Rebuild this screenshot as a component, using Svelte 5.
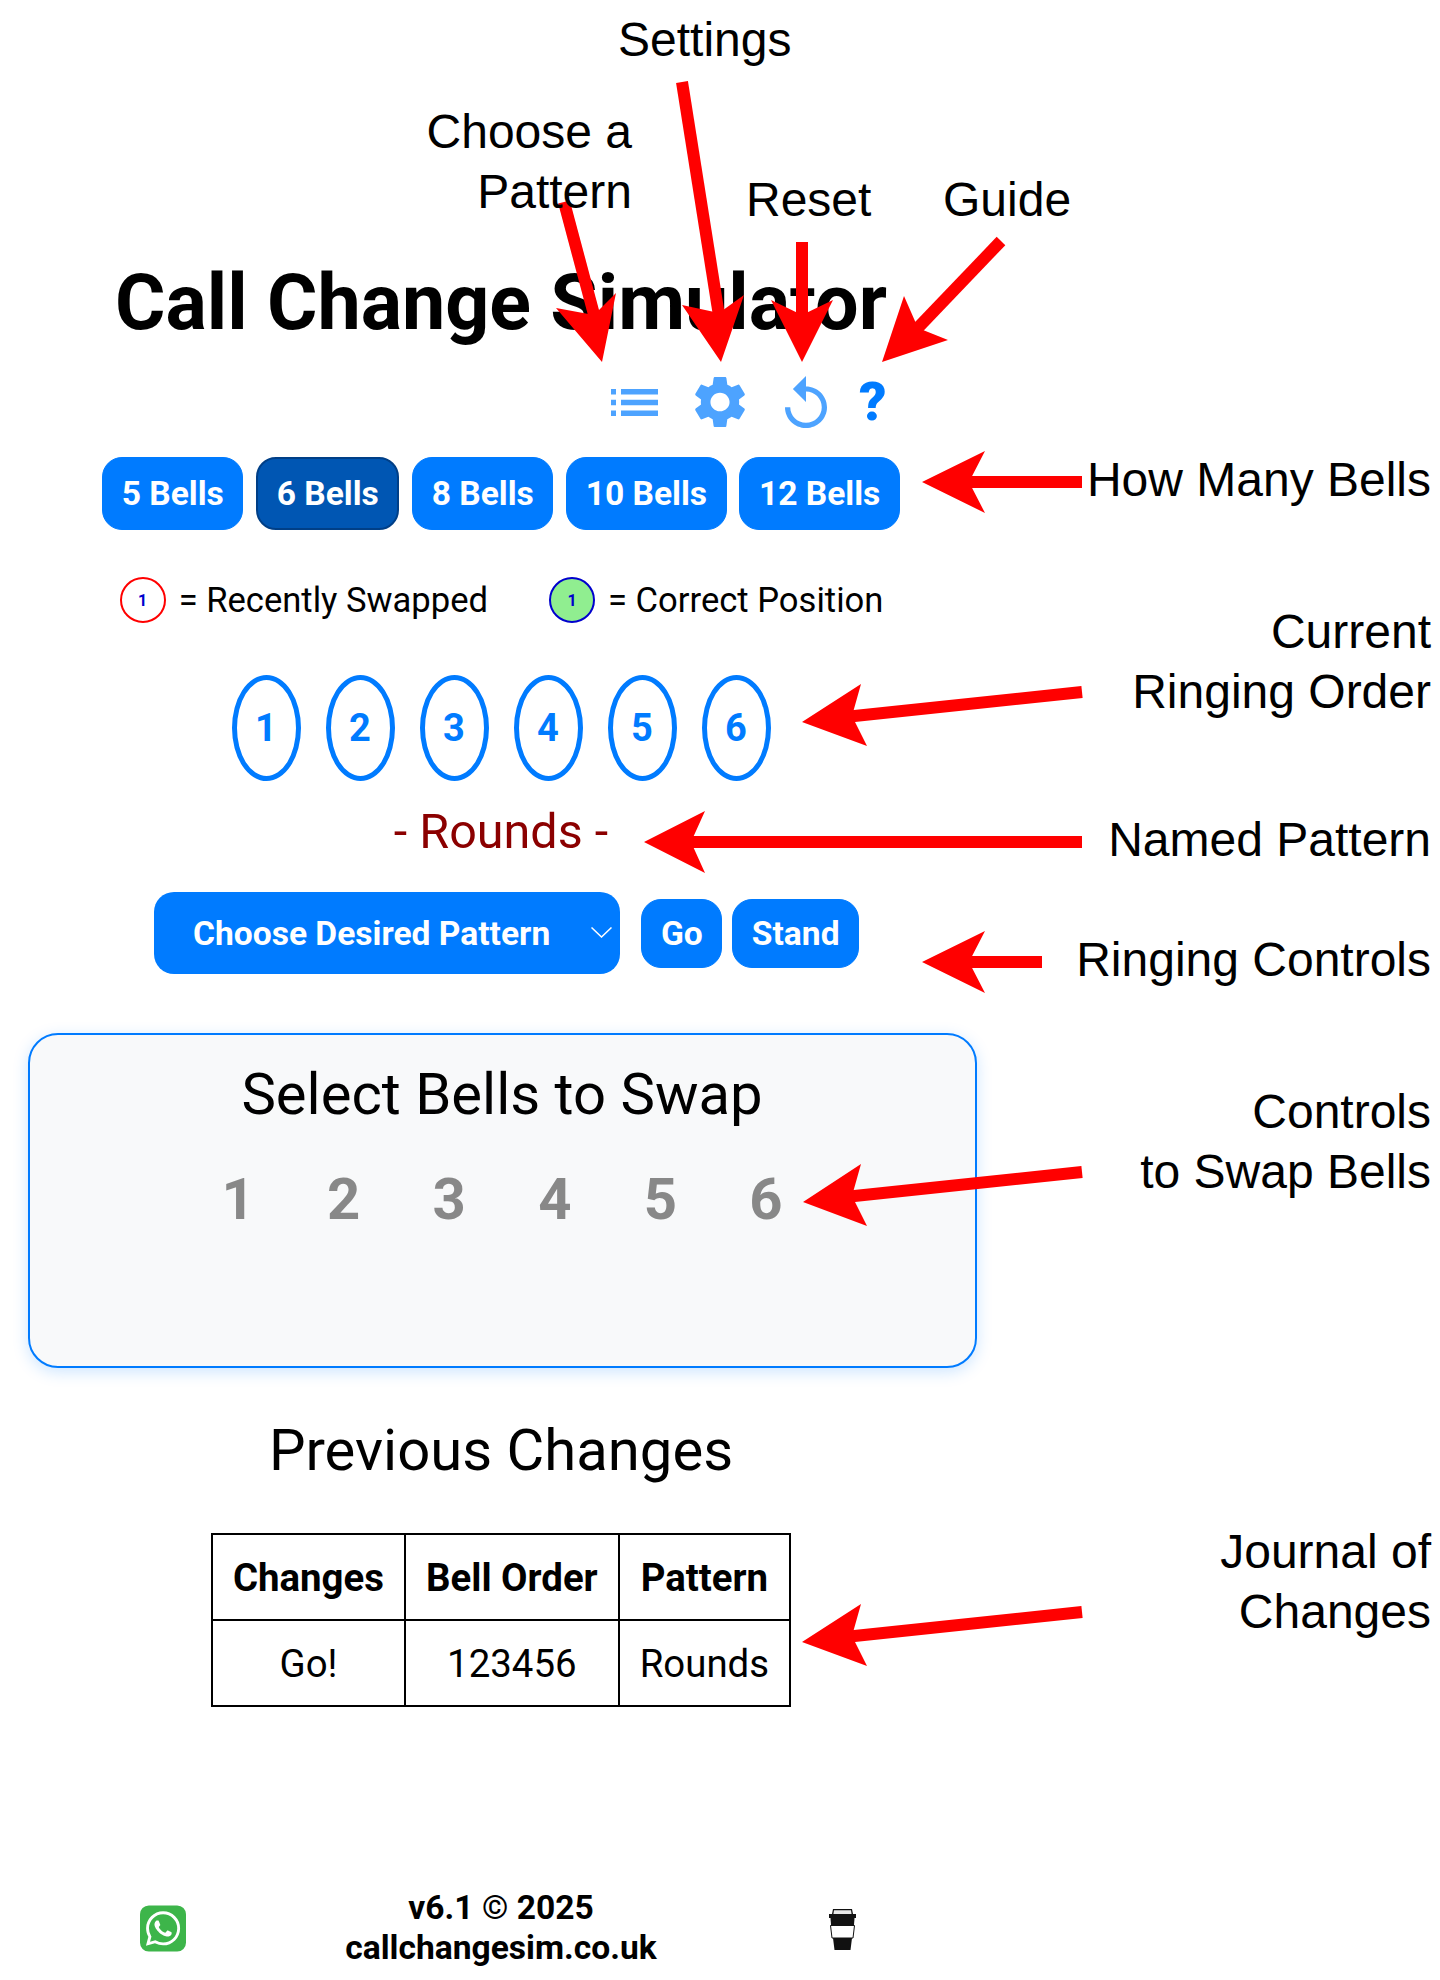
<script lang="ts">
    const bellCounts = [5, 6, 8, 10, 12];
    const order = [1, 2, 3, 4, 5, 6];

    const labels = [
        { text: "Settings", cls: "settings" },
        { text: "Choose a\nPattern", cls: "pattern" },
        { text: "Reset", cls: "reset" },
        { text: "Guide", cls: "guide" },
        { text: "How Many Bells", cls: "side bells" },
        { text: "Current\nRinging Order", cls: "side order-note" },
        { text: "Named Pattern", cls: "side named" },
        { text: "Ringing Controls", cls: "side controls" },
        { text: "Controls\nto Swap Bells", cls: "side swap" },
        { text: "Journal of\nChanges", cls: "side journal" },
    ];

    // tail and stem end, then the head polygon (barb, tip, barb, notch)
    const arrows = [
        { tail: [564, 202], stem: [596, 322], head: "556,308 602,362 616,293 594,315" },
        { tail: [682, 82], stem: [720, 322], head: "682,305 721,362 744,295 719,313" },
        { tail: [802, 242], stem: [802, 322], head: "771,300 802,362 833,300 802,315" },
        { tail: [1001, 241], stem: [912, 334], head: "904,296 882,362 948,340 918,328" },
        { tail: [1082, 482], stem: [960, 482], head: "985,451 922,482 985,513 969,482" },
        { tail: [1082, 692], stem: [845, 717], head: "861,684 802,722 867,746 852,716" },
        { tail: [1082, 842], stem: [682, 842], head: "705,811 644,842 705,873 691,842" },
        { tail: [1042, 962], stem: [960, 962], head: "985,931 922,962 985,993 969,962" },
        { tail: [1082, 1172], stem: [845, 1197], head: "861,1164 803,1202 867,1226 852,1196" },
        { tail: [1082, 1612], stem: [845, 1637], head: "861,1604 802,1642 867,1666 852,1636" },
    ];
</script>

<div class="page">
    <main>
        <h1>Call Change Simulator</h1>

        <div class="toolbar">
            <svg class="icon list" viewBox="0 0 47 27" fill="#4da3ff">
                <rect x="0" y="0" width="5" height="5.5" />
                <rect x="0" y="10.75" width="5" height="5.5" />
                <rect x="0" y="21.5" width="5" height="5.5" />
                <rect x="10" y="0" width="37" height="5.5" />
                <rect x="10" y="10.75" width="37" height="5.5" />
                <rect x="10" y="21.5" width="37" height="5.5" />
            </svg>
            <svg class="icon gear" viewBox="2.6 2 18.8 20" preserveAspectRatio="none" fill="#4da3ff">
                <path d="M19.14 12.94c.04-.3.06-.61.06-.94 0-.32-.02-.64-.07-.94l2.03-1.58c.18-.14.23-.41.12-.61l-1.92-3.32c-.12-.22-.37-.29-.59-.22l-2.39.96c-.5-.38-1.03-.7-1.62-.94l-.36-2.54c-.04-.24-.24-.41-.48-.41h-3.84c-.24 0-.43.17-.47.41l-.36 2.54c-.59.24-1.13.57-1.62.94l-2.39-.96c-.22-.08-.47 0-.59.22L2.74 8.87c-.12.21-.08.47.12.61l2.03 1.58c-.05.3-.09.63-.09.94s.02.64.07.94l-2.03 1.58c-.18.14-.23.41-.12.61l1.92 3.32c.12.22.37.29.59.22l2.39-.96c.5.38 1.03.7 1.62.94l.36 2.54c.05.24.24.41.48.41h3.84c.24 0 .44-.17.47-.41l.36-2.54c.59-.24 1.13-.56 1.62-.94l2.39.96c.22.08.47 0 .59-.22l1.92-3.32c.12-.22.07-.47-.12-.61l-2.01-1.58zM12 15.6c-1.98 0-3.6-1.62-3.6-3.6s1.62-3.6 3.6-3.6 3.6 1.62 3.6 3.6-1.62 3.6-3.6 3.6z" />
            </svg>
            <svg class="icon replay" viewBox="4 1 16 20" preserveAspectRatio="none" fill="#4da3ff">
                <path d="M12 5V1L7 6l5 5V7c3.31 0 6 2.69 6 6s-2.69 6-6 6-6-2.69-6-6H4c0 4.42 3.58 8 8 8s8-3.58 8-8-3.58-8-8-8z" />
            </svg>
            <span class="help">?</span>
        </div>

        <div class="bell-buttons">
            {#each bellCounts as n}
                <button class="pill" class:active={n === 6}>{n} Bells</button>
            {/each}
        </div>

        <div class="legend">
            <span class="dot swapped">1</span>
            <span>= Recently Swapped</span>
            <span class="dot correct">1</span>
            <span>= Correct Position</span>
        </div>

        <div class="order">
            {#each order as n}
                <span class="bell">{n}</span>
            {/each}
        </div>

        <div class="pattern-name">- Rounds -</div>

        <div class="ringing">
            <div class="select">
                Choose Desired Pattern
                <svg class="chevron" viewBox="0 0 21 11" fill="none" stroke="#fff" stroke-width="1.5">
                    <path d="M0.5 0.5 L10.5 10 L20.5 0.5" />
                </svg>
            </div>
            <button class="pill small">Go</button>
            <button class="pill small">Stand</button>
        </div>

        <section class="swap-card">
            <h2>Select Bells to Swap</h2>
            <div class="swap-row">
                {#each order as n}
                    <span>{n}</span>
                {/each}
            </div>
        </section>

        <h2 class="previous">Previous Changes</h2>

        <table>
            <thead>
                <tr><th>Changes</th><th>Bell Order</th><th>Pattern</th></tr>
            </thead>
            <tbody>
                <tr><td>Go!</td><td>123456</td><td>Rounds</td></tr>
            </tbody>
        </table>

        <footer>
            <svg class="whatsapp" viewBox="0 0 47 47">
                <rect width="47" height="47" rx="9" fill="#3db54a" />
                <g transform="translate(6 6) scale(1.46)" fill="#fff">
                    <path d="M17.472 14.382c-.297-.149-1.758-.867-2.03-.967-.273-.099-.471-.148-.67.15-.197.297-.767.966-.94 1.164-.173.199-.347.223-.644.075-.297-.15-1.255-.463-2.39-1.475-.883-.788-1.48-1.761-1.653-2.059-.173-.297-.018-.458.13-.606.134-.133.298-.347.446-.52.149-.174.198-.298.298-.497.099-.198.05-.371-.025-.52-.075-.149-.669-1.612-.916-2.207-.242-.579-.487-.5-.669-.51-.173-.008-.371-.01-.57-.01-.198 0-.52.074-.792.372-.272.297-1.04 1.016-1.04 2.479 0 1.462 1.065 2.875 1.213 3.074.149.198 2.096 3.2 5.077 4.487.709.306 1.262.489 1.694.625.712.227 1.36.195 1.871.118.571-.085 1.758-.719 2.006-1.413.248-.694.248-1.289.173-1.413-.074-.124-.272-.198-.57-.347m-5.421 7.403h-.004a9.87 9.87 0 01-5.031-1.378l-.361-.214-3.741.982.998-3.648-.235-.374a9.86 9.86 0 01-1.51-5.26c.001-5.45 4.436-9.884 9.888-9.884 2.64 0 5.122 1.03 6.988 2.898a9.825 9.825 0 012.893 6.994c-.003 5.45-4.437 9.884-9.885 9.884m8.413-18.297A11.815 11.815 0 0012.05 0C5.495 0 .16 5.335.157 11.892c0 2.096.547 4.142 1.588 5.945L.057 24l6.305-1.654a11.882 11.882 0 005.683 1.448h.005c6.554 0 11.89-5.335 11.893-11.893a11.821 11.821 0 00-3.48-8.413z" />
                </g>
            </svg>
            <div class="credits">v6.1 © 2025<br />callchangesim.co.uk</div>
            <svg class="coffee" viewBox="0 0 27 41">
                <path d="M4 0 H23 L24 5 H27 V9 H0 V5 H3 Z" fill="#111" />
                <path d="M5 1.2 H22 L22.6 5 H4.4 Z" fill="#e8e8e8" />
                <path d="M1.5 9 H25.5 L25 16 H2 Z" fill="#111" />
                <path d="M1.5 16.5 H25.5 L24 29 H3 Z" fill="#fff" stroke="#111" />
                <path d="M4 29 H23 L21.5 41 H5.5 Z" fill="#111" />
            </svg>
        </footer>
    </main>

    <!-- annotation layer sits over the screenshot -->
    <svg class="arrows" viewBox="0 0 1440 1980">
        {#each arrows as a}
            <line x1={a.tail[0]} y1={a.tail[1]} x2={a.stem[0]} y2={a.stem[1]} stroke="#f00" stroke-width="12" />
            <polygon points={a.head} fill="#f00" />
        {/each}
    </svg>
    {#each labels as l}
        <div class="note {l.cls}">{l.text}</div>
    {/each}
</div>

<style>
    :global(body) {
        margin: 0;
        background: #fff;
    }

    .page {
        position: relative;
        width: 1440px;
        height: 1980px;
        overflow: hidden;
        font-family: Roboto, sans-serif;
        color: #000;
    }

    main {
        width: 1002px;
        display: flex;
        flex-direction: column;
        align-items: center;
    }

    h1 {
        margin: 253px 0 0;
        font-size: 77.2px;
        line-height: 100px;
        font-weight: 700;
    }

    .toolbar {
        align-self: stretch;
        height: 54px;
        margin-top: 22px;
        display: flex;
        align-items: center;
        padding-left: 611px;
    }

    .icon {
        display: block;
        flex-shrink: 0;
    }

    .list {
        width: 47px;
        height: 27px;
    }

    .gear {
        width: 50px;
        height: 52px;
        margin-left: 37px;
    }

    .replay {
        width: 42px;
        height: 52px;
        margin-left: 40px;
    }

    .help {
        margin-left: 32px;
        font-size: 54px;
        line-height: 54px;
        font-weight: 900;
        color: #007bff;
    }

    .pill {
        border: 1px solid #007bff;
        background: #007bff;
        color: #fff;
        font-family: inherit;
        font-weight: 700;
        font-size: 33.6px;
        height: 73px;
        padding: 0 18.5px;
        border-radius: 20px;
    }

    .pill.active {
        background: #0056b3;
        border: 2px solid #003f87;
    }

    .bell-buttons {
        display: flex;
        gap: 12.8px;
        margin-top: 28px;
    }

    .legend {
        display: flex;
        align-items: center;
        margin-top: 47px;
        padding-left: 1px;
        font-size: 34.6px;
        height: 46px;
    }

    .dot {
        width: 46px;
        height: 46px;
        box-sizing: border-box;
        border-radius: 50%;
        border: 2px solid #f00;
        display: flex;
        align-items: center;
        justify-content: center;
        font-size: 16px;
        font-weight: 700;
        color: #0000cd;
        margin-right: 13px;
    }

    .dot.correct {
        background: #90ee90;
        border-color: #0000cd;
        margin-left: 61px;
    }

    .order {
        display: flex;
        gap: 25px;
        margin: 52px 0 0 0;
    }

    .bell {
        width: 69px;
        height: 106px;
        box-sizing: border-box;
        border: 5px solid #007bff;
        border-radius: 50%;
        color: #007bff;
        font-size: 38px;
        font-weight: 700;
        display: flex;
        align-items: center;
        justify-content: center;
    }

    .pattern-name {
        margin-top: 21px;
        font-size: 48.5px;
        line-height: 60px;
        color: #8b0000;
    }

    .ringing {
        display: flex;
        align-items: center;
        gap: 10px;
        margin: 30px 0 0 11px;
    }

    .select {
        position: relative;
        width: 466.5px;
        height: 82px;
        box-sizing: border-box;
        padding-left: 39px;
        margin-right: 11px;
        background: #007bff;
        border-radius: 20px;
        color: #fff;
        font-size: 33.6px;
        font-weight: 700;
        display: flex;
        align-items: center;
    }

    .chevron {
        position: absolute;
        right: 8px;
        top: 35px;
        width: 21px;
        height: 11px;
    }

    .pill.small {
        height: 69px;
    }

    .swap-card {
        align-self: flex-start;
        box-sizing: border-box;
        width: 949px;
        height: 335px;
        margin: 59px 0 0 28px;
        padding-right: 1px;
        background: #f8f9fa;
        border: 2px solid #007bff;
        border-radius: 30px;
        box-shadow: 0 4px 16px rgba(0, 123, 255, 0.2);
    }

    h2 {
        margin: 0;
        font-size: 58px;
        line-height: 68px;
        font-weight: 400;
        text-align: center;
    }

    .swap-card h2 {
        margin-top: 25px;
    }

    .swap-row {
        display: flex;
        justify-content: center;
        gap: 72.3px;
        margin-top: 37px;
        font-size: 58px;
        line-height: 68px;
        font-weight: 700;
        color: #888;
    }

    .previous {
        margin-top: 48px;
    }

    table {
        margin-top: 49px;
        border-collapse: collapse;
        font-size: 38.4px;
    }

    th,
    td {
        border: 2px solid #000;
        padding: 0 20px;
        height: 84px;
        font-weight: 400;
        text-align: center;
    }

    th {
        font-weight: 700;
    }

    footer {
        align-self: stretch;
        margin-top: 191px;
        display: flex;
        align-items: center;
        height: 60px;
        position: relative;
    }

    .whatsapp {
        position: absolute;
        left: 140px;
        top: 7px;
        width: 46px;
        height: 47px;
    }

    .credits {
        flex: 1;
        text-align: center;
        font-size: 33.6px;
        line-height: 40px;
        font-weight: 700;
    }

    .coffee {
        position: absolute;
        left: 829px;
        top: 11px;
        width: 27px;
        height: 41px;
    }

    .arrows {
        position: absolute;
        inset: 0;
        width: 1440px;
        height: 1980px;
    }

    .note {
        position: absolute;
        font-family: "Liberation Sans", Arial, sans-serif;
        font-size: 48px;
        line-height: 60px;
        white-space: pre-line;
        text-align: right;
    }

    .side {
        right: 9px;
    }

    .settings { left: 618px; top: 10px; }
    .pattern { right: 808px; top: 102px; }
    .reset { left: 746px; top: 170px; }
    .guide { left: 943px; top: 170px; }
    .bells { top: 450px; }
    .order-note { top: 602px; }
    .named { top: 810px; }
    .controls { top: 930px; }
    .swap { top: 1082px; }
    .journal { top: 1522px; }
</style>
